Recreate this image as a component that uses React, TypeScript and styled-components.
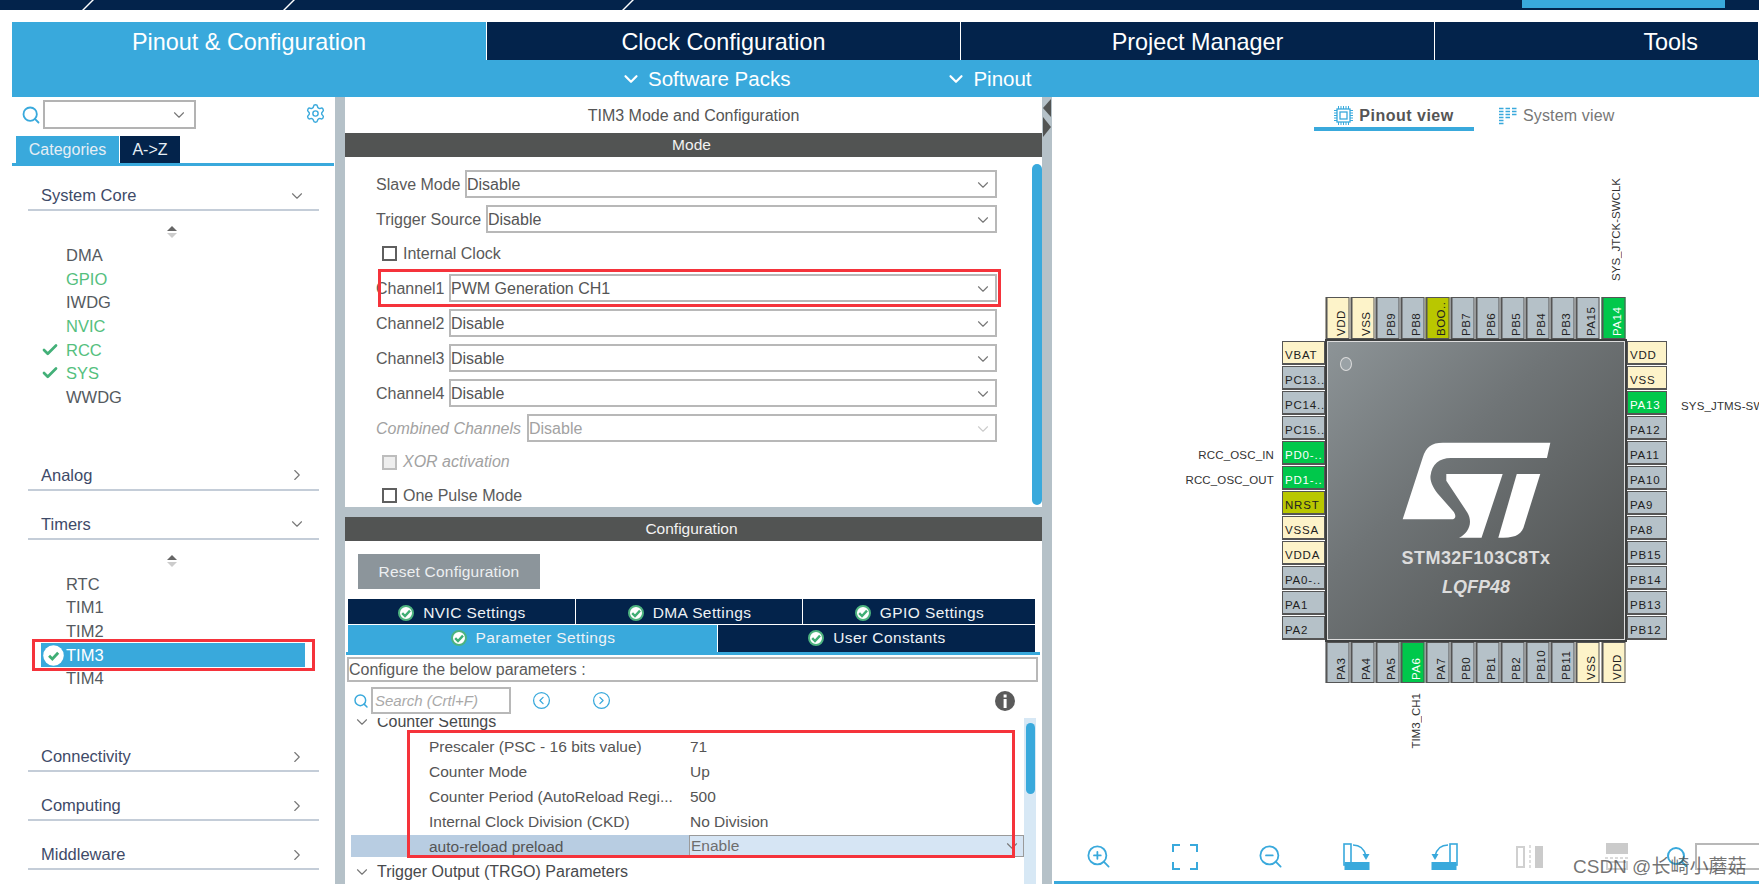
import React from "react";
import styled, { createGlobalStyle } from "styled-components";
import { ChevronDown, ChevronRight, Search, Settings, Check, CircleChevronLeft, CircleChevronRight, ZoomIn, ZoomOut } from "lucide-react";

const NAVY = "#03234b";
const BLUE = "#39a9dc";
const GUTTER = "#b5c1c8";
const FONT = `"Liberation Sans", Arial, sans-serif`;

const Global = createGlobalStyle`
  html, body { margin: 0; padding: 0; background: #fff; overflow: hidden; }
  body { font-family: ${FONT}; }
  * { box-sizing: border-box; }
`;

const Page = styled.div`
  width: 1759px;
  height: 884px;
  display: flex;
  flex-direction: column;
  overflow: hidden;
  position: relative;
`;

const TopBar = styled.div`
  height: 10px;
  background: ${NAVY};
  display: flex;
  align-items: flex-start;
  flex: none;
`;
const Slash = styled.i<{ $ml: number }>`
  display: block;
  width: 2px;
  height: 10px;
  background: #fff;
  transform: skewX(-45deg);
  margin-left: ${(p) => p.$ml}px;
`;
const TopActive = styled.div`
  width: 203px;
  height: 8px;
  background: ${BLUE};
  margin-left: 893px;
`;

const Nav = styled.nav`
  flex: none;
  height: 38px;
  margin: 12px 0 0 12px;
  display: grid;
  grid-template-columns: 475px 474px 474px 1fr;
`;
const NavTab = styled.div<{ $active?: boolean; $end?: boolean }>`
  background: ${(p) => (p.$active ? BLUE : NAVY)};
  border-right: 1px solid #fff;
  color: #fff;
  font-size: 23.4px;
  display: flex;
  align-items: center;
  justify-content: ${(p) => (p.$end ? "flex-end" : "center")};
  padding-right: ${(p) => (p.$end ? 60 : 0)}px;
  padding-top: 3px;
`;
const SubBar = styled.div`
  flex: none;
  height: 37px;
  margin-left: 12px;
  background: ${BLUE};
  color: #fff;
  font-size: 20.5px;
  display: flex;
  align-items: center;
  padding-left: 608px;
  gap: 155px;
`;
const SubItem = styled.div`
  display: flex;
  align-items: center;
  gap: 6px;
`;

const Main = styled.div`
  flex: 1;
  display: flex;
  min-height: 0;
  margin-left: 12px;
`;

/* Sidebar */
const Side = styled.aside`
  width: 323px;
  flex: none;
  display: flex;
  flex-direction: column;
  overflow: hidden;
`;
const SearchRow = styled.div`
  height: 39px;
  display: flex;
  align-items: flex-start;
  padding: 3px 9px 0 9px;
  color: ${BLUE};
`;
const SearchGlyph = styled.div`
  width: 22px;
  height: 29px;
  display: flex;
  align-items: center;
`;
const Combo = styled.div`
  width: 153px;
  height: 29px;
  border: 2px solid #b3b3b3;
  display: flex;
  align-items: center;
  justify-content: flex-end;
  padding-right: 6px;
  color: #777;
`;
const Gear = styled.div`
  margin: 3px 0 0 auto;
  color: ${BLUE};
`;
const SideTabs = styled.div`
  display: flex;
  height: 30px;
  padding-left: 2px;
  border-bottom: 3px solid ${BLUE};
  margin-right: 1px;
`;
const SideTab = styled.div<{ $w: number; $active?: boolean }>`
  width: ${(p) => p.$w}px;
  margin-left: ${(p) => (p.$active ? 2 : 1)}px;
  background: ${(p) => (p.$active ? BLUE : NAVY)};
  color: #e6eef5;
  font-size: 16px;
  display: flex;
  align-items: center;
  justify-content: center;
`;
const SectionHead = styled.div<{ $mt: number }>`
  height: 25px;
  margin: ${(p) => p.$mt}px 16px 0 16px;
  border-bottom: 2px solid #c4cdd8;
  display: flex;
  align-items: center;
  justify-content: space-between;
  padding: 0 13px 4px 13px;
  color: #3e4a68;
  font-size: 16.5px;
  flex: none;
`;
const Scroller = styled.div`
  height: 32px;
  display: flex;
  flex-direction: column;
  align-items: center;
  justify-content: flex-end;
  gap: 2px;
  padding: 0 0 5px 0;
  width: 320px;
`;
const ArrowUp = styled.i`
  width: 0; height: 0;
  border-left: 5px solid transparent;
  border-right: 5px solid transparent;
  border-bottom: 5px solid #666;
`;
const ArrowDown = styled.i`
  width: 0; height: 0;
  border-left: 5px solid transparent;
  border-right: 5px solid transparent;
  border-top: 5px solid #ccc;
`;
const Item = styled.div<{ $green?: boolean; $selected?: boolean }>`
  height: 23.7px;
  position: relative;
  display: flex;
  align-items: center;
  margin-left: 29px;
  width: 264px;
  padding-left: ${(p) => (p.$selected ? 0 : 25)}px;
  padding-top: 1px;
  font-size: 16.5px;
  color: ${(p) => (p.$selected ? "#fff" : p.$green ? "#55c07e" : "#555a60")};
  background: ${(p) => (p.$selected ? BLUE : "transparent")};
`;
const ItemCheck = styled.span`
  position: absolute;
  left: 0;
  top: 3px;
  color: #43b078;
  display: flex;
`;
const SelIcon = styled.span`
  display: flex;
  width: 25px;
  justify-content: center;
`;

const RedBox = styled.div<{ $t: number; $l: number; $r: number; $b: number }>`
  position: absolute;
  top: ${(p) => p.$t}px;
  left: ${(p) => p.$l}px;
  right: ${(p) => p.$r}px;
  bottom: ${(p) => p.$b}px;
  border: 3px solid #f5333b;
  pointer-events: none;
  z-index: 3;
`;

const Gutter = styled.div`
  width: 10px;
  flex: none;
  background: ${GUTTER};
  position: relative;
`;
const SplitLeft = styled.i`
  position: absolute;
  top: 2px;
  left: 1px;
  width: 0; height: 0;
  border-top: 9px solid transparent;
  border-bottom: 9px solid transparent;
  border-right: 8px solid #525453;
`;
const SplitRight = styled.i`
  position: absolute;
  top: 20px;
  left: 1px;
  width: 0; height: 0;
  border-top: 10px solid transparent;
  border-bottom: 10px solid transparent;
  border-left: 8px solid #525453;
`;

/* Center */
const Center = styled.section`
  width: 697px;
  flex: none;
  display: flex;
  flex-direction: column;
  background: ${GUTTER};
`;
const ModePane = styled.div`
  height: 410px;
  background: #fff;
  overflow: hidden;
  display: flex;
  flex-direction: column;
  flex: none;
`;
const PaneTitle = styled.div`
  height: 36px;
  flex: none;
  display: flex;
  align-items: center;
  justify-content: center;
  color: #555;
  font-size: 16px;
  padding-top: 2px;
`;
const DarkBar = styled.div`
  height: 24px;
  flex: none;
  background: #525453;
  color: #f2f2f2;
  font-size: 15.5px;
  display: flex;
  align-items: center;
  justify-content: center;
  padding-right: 4px;
`;
const ModeBody = styled.div`
  flex: 1;
  position: relative;
  padding: 13px 45px 0 31px;
`;
const ModeThumb = styled.div`
  position: absolute;
  right: 0;
  top: 7px;
  width: 10px;
  height: 341px;
  border-radius: 5px;
  background: ${BLUE};
`;
const FieldRow = styled.div`
  height: 28px;
  margin-bottom: 7px;
  display: flex;
  align-items: center;
  position: relative;
`;
const FieldLabel = styled.div<{ $w: number; $off?: boolean }>`
  width: ${(p) => p.$w}px;
  flex: none;
  font-size: 16px;
  padding-top: 1px;
  white-space: nowrap;
  color: ${(p) => (p.$off ? "#a2a2a2" : "#5a5a5a")};
  font-style: ${(p) => (p.$off ? "italic" : "normal")};
`;
const SelectBox = styled.div<{ $off?: boolean }>`
  flex: 1;
  height: 28px;
  border: 2px solid #b8b8b8;
  display: flex;
  align-items: center;
  justify-content: space-between;
  padding: 1px 3px 0 0;
  font-size: 16px;
  color: ${(p) => (p.$off ? "#a2a2a2" : "#555")};
`;
const CheckRow = styled.div<{ $off?: boolean; $h?: number }>`
  height: ${(p) => p.$h ?? 27}px;
  margin-bottom: 7px;
  display: flex;
  align-items: center;
  padding-left: 6px;
  gap: 6px;
  font-size: 16px;
  color: ${(p) => (p.$off ? "#a2a2a2" : "#5a5a5a")};
  font-style: ${(p) => (p.$off ? "italic" : "normal")};
`;
const CheckBox = styled.i<{ $off?: boolean }>`
  width: 15px;
  height: 15px;
  display: block;
  border: 2px solid ${(p) => (p.$off ? "#bdbdbd" : "#5f5f5f")};
  background: ${(p) => (p.$off ? "#eee" : "#fff")};
`;
const ConfigPane = styled.div`
  margin-top: 10px;
  flex: 1;
  min-height: 0;
  background: #fff;
  display: flex;
  flex-direction: column;
`;
const ResetBtn = styled.div`
  width: 182px;
  height: 35px;
  margin: 13px 0 0 13px;
  background: #8c959b;
  color: #eceff1;
  font-size: 15.5px;
  display: flex;
  align-items: center;
  justify-content: center;
  letter-spacing: 0.2px;
  flex: none;
`;
const TabRow = styled.div<{ $cols: string; $h: number; $mt: number; $shift: number }>`
  display: grid;
  grid-template-columns: ${(p) => p.$cols};
  height: ${(p) => p.$h}px;
  margin: ${(p) => p.$mt}px 6px 0 3px;
  flex: none;
  & > div {
    padding-top: ${(p) => Math.max(p.$shift, 0)}px;
    padding-bottom: ${(p) => Math.max(-p.$shift, 0)}px;
  }
`;
const ConfTab = styled.div<{ $active?: boolean }>`
  background: ${(p) => (p.$active ? BLUE : NAVY)};
  color: #eef2f6;
  font-size: 15.5px;
  letter-spacing: 0.4px;
  border-right: 1px solid #fff;
  display: flex;
  align-items: center;
  justify-content: center;
  gap: 8px;
`;
const TabRule = styled.div`
  height: 3px;
  background: ${BLUE};
  margin: 0 2px 0 1px;
  flex: none;
`;
const NoteBox = styled.div`
  height: 25px;
  margin: 2px 4px 0 2px;
  border: 2px solid #b8b8b8;
  font-size: 16px;
  color: #5a5a5a;
  padding-left: 0;
  display: flex;
  align-items: center;
  flex: none;
  white-space: nowrap;
`;
const ToolRow = styled.div`
  height: 27px;
  margin-top: 5px;
  display: flex;
  align-items: center;
  padding-left: 8px;
  color: ${BLUE};
  flex: none;
`;
const SearchInput = styled.div`
  width: 140px;
  height: 27px;
  margin-left: 2px;
  border: 2px solid #b8b8b8;
  color: #a9a9a9;
  font-style: italic;
  font-size: 15px;
  padding-left: 2px;
  display: flex;
  align-items: center;
`;
const RoundBtn = styled.div<{ $ml: number }>`
  margin-left: ${(p) => p.$ml}px;
  display: flex;
  color: ${BLUE};
`;
const Tree = styled.div`
  flex: 1;
  min-height: 0;
  margin-top: 4px;
  display: flex;
  overflow: hidden;
  padding-left: 6px;
`;
const TreeRows = styled.div`
  flex: 1;
  margin-top: -8.5px;
  position: relative;
`;
const TreeGroup = styled.div`
  height: 25px;
  display: flex;
  align-items: center;
  gap: 6px;
  padding-left: 2px;
  color: #47494c;
  font-size: 16px;
  white-space: nowrap;
`;
const ParamBlock = styled.div`
  position: relative;
`;
const ParamRow = styled.div<{ $sel?: boolean }>`
  height: ${(p) => (p.$sel ? 22 : 25)}px;
  margin-bottom: ${(p) => (p.$sel ? 3 : 0)}px;
  display: flex;
  align-items: center;
  font-size: 15.5px;
  color: #555;
  background: ${(p) => (p.$sel ? "#b8cde2" : "transparent")};
  white-space: nowrap;
`;
const ParamName = styled.div<{ $sel?: boolean }>`
  width: 338px;
  padding-left: 78px;
  padding-top: ${(p) => (p.$sel ? 2 : 0)}px;
  flex: none;
  overflow: hidden;
`;
const ParamValue = styled.div<{ $sel?: boolean }>`
  flex: 1;
  height: 100%;
  display: flex;
  align-items: center;
  justify-content: space-between;
  padding: ${(p) => (p.$sel ? 1 : 0)}px 2px 0 1px;
  background: ${(p) => (p.$sel ? "#d6e5f4" : "transparent")};
  border: ${(p) => (p.$sel ? "1px solid #9a9a9a" : "none")};
  color: ${(p) => (p.$sel ? "#6e6e6e" : "#555")};
`;
const Track = styled.div`
  width: 12px;
  margin-right: 6px;
  flex: none;
  background: #d7e8f5;
  padding: 5px 1px 0 2px;
`;
const Thumb = styled.div`
  width: 9px;
  height: 71px;
  border-radius: 5px;
  background: ${BLUE};
`;

/* Right */
const Right = styled.section`
  flex: 1;
  min-width: 0;
  display: flex;
  flex-direction: column;
  position: relative;
  overflow: hidden;
`;
const ViewTabs = styled.div`
  flex: none;
  height: 34px;
  display: flex;
  padding-left: 262px;
`;
const ViewTab = styled.div<{ $active?: boolean }>`
  width: ${(p) => (p.$active ? 160 : 120)}px;
  margin-left: ${(p) => (p.$active ? 0 : 25)}px;
  border-bottom: ${(p) => (p.$active ? `4px solid ${BLUE}` : "none")};
  display: flex;
  align-items: center;
  justify-content: ${(p) => (p.$active ? "center" : "flex-start")};
  gap: 6px;
  padding-top: ${(p) => (p.$active ? 7 : 4)}px;
  height: 34px;
  font-size: 16px;
  font-weight: ${(p) => (p.$active ? 700 : 400)};
  color: ${(p) => (p.$active ? "#555" : "#777")};
  letter-spacing: ${(p) => (p.$active ? 0.5 : 0.15)}px;
`;
const Stage = styled.div`
  flex: 1;
  min-height: 0;
  padding: 166px 0 0 230px;
`;
const Chip = styled.div`
  position: relative;
  display: grid;
  grid-template-columns: 43px 302px 42px;
  grid-template-rows: 42px 303px 41px;
  width: 387px;
`;
const PinRowH = styled.div<{ $row: number }>`
  grid-column: 2;
  grid-row: ${(p) => p.$row};
  display: flex;
  gap: 1.55px;
  padding-left: 1px;
`;
const PinCol = styled.div<{ $col: number }>`
  grid-column: ${(p) => p.$col};
  grid-row: 2;
  display: flex;
  flex-direction: column;
  gap: 1px;
  padding-top: 2px;
`;
const pinBg: Record<string, string> = { gpio: "#b5c1c8", power: "#fdf3c9", green: "#00c84b", olive: "#b9c700" };
const VPin = styled.div<{ $k: string }>`
  width: 23.5px;
  height: 100%;
  background: ${(p) => pinBg[p.$k]};
  border: 1px solid #555;
  border-width: 1px 2px 1px 1px;
  color: ${(p) => (p.$k === "green" ? "#fff" : "#222")};
  writing-mode: vertical-rl;
  transform: rotate(180deg);
  font-size: 11.5px;
  letter-spacing: 0.5px;
  line-height: 24px;
  padding-top: 2px;
  white-space: nowrap;
  overflow: hidden;
`;
const HPin = styled.div<{ $k: string; $w: number }>`
  width: ${(p) => p.$w}px;
  height: 24px;
  background: ${(p) => pinBg[p.$k]};
  border: 1px solid #555;
  border-bottom-width: 2px;
  color: ${(p) => (p.$k === "green" ? "#fff" : "#222")};
  font-size: 11.5px;
  letter-spacing: 0.8px;
  line-height: 26px;
  padding-left: 2px;
  white-space: nowrap;
  overflow: hidden;
`;
const Body = styled.div`
  grid-column: 2;
  grid-row: 2;
  position: relative;
  border: 2px solid #3d3f3f;
  outline: 1px solid #ddd;
  outline-offset: -3px;
  background: linear-gradient(135deg, #8d9497 0%, #6f7476 40%, #4b4d4c 100%);
  display: flex;
  flex-direction: column;
  align-items: center;
  padding-top: 100px;
`;
const Dot = styled.i`
  position: absolute;
  left: 13px;
  top: 16px;
  width: 12px;
  height: 14px;
  border-radius: 50%;
  background: #9aa2a6;
  border: 1px solid #dcdcdc;
`;
const ChipName = styled.div`
  margin-top: 8px;
  color: #dcdcdc;
  font-weight: 700;
  font-size: 18px;
  letter-spacing: 0.45px;
`;
const ChipPkg = styled.div`
  margin-top: 8px;
  color: #dcdcdc;
  font-weight: 700;
  font-style: italic;
  font-size: 18px;
`;
const PinLabel = styled.div<{ $x: number; $y: number; $rot?: boolean; $right?: boolean }>`
  position: absolute;
  left: ${(p) => p.$x}px;
  top: ${(p) => p.$y}px;
  font-size: 11.5px;
  letter-spacing: ${(p) => (p.$rot ? 0 : 0.15)}px;
  color: #333;
  white-space: nowrap;
  ${(p) => (p.$rot ? "writing-mode: vertical-rl; transform: rotate(180deg);" : "")}
  ${(p) => (p.$right ? "transform: translateX(-100%);" : "")}
`;
const Toolbar = styled.div`
  flex: none;
  height: 27px;
  margin-bottom: 11px;
  display: flex;
  align-items: center;
  padding-left: 3px;
  color: ${BLUE};
`;
const ToolSlot = styled.div`
  width: 86.4px;
  flex: none;
  display: flex;
  justify-content: center;
`;
const ZoomGlass = styled.div`
  margin-left: 5px;
  display: flex;
`;
const ZoomBox = styled.div`
  width: 70px;
  height: 27px;
  margin-left: 6px;
  border: 2px solid #b8b8b8;
  flex: none;
`;
const BottomLine = styled.div`
  flex: none;
  height: 3px;
  margin-left: 2px;
  background: ${BLUE};
`;
const Watermark = styled.div`
  position: absolute;
  left: 1573px;
  top: 851px;
  font-family: "Liberation Sans", "Noto Sans CJK SC", sans-serif;
  font-size: 19px;
  color: rgba(70, 70, 70, 0.75);
  white-space: nowrap;
  z-index: 5;
`;

const TickIcon = ({ ring }: { ring?: boolean }) => (
  <svg width={ring ? 18 : 21} height={ring ? 18 : 21} viewBox="0 0 18 18">
    <circle cx="9" cy="9" r={ring ? 7 : 8.8} fill="#fff" stroke={ring ? "#4db37f" : "none"} strokeWidth="2" />
    <path d="M5.2 9.2 8 12 13 6.6" fill="none" stroke="#3fae74" strokeWidth="2.4" />
  </svg>
);
const ChipIcon = () => (
  <svg width="19" height="19" viewBox="0 0 19 19" fill="none" stroke={BLUE}>
    <rect x="3" y="3" width="13" height="13" strokeWidth="1.3" />
    <rect x="6" y="6" width="7" height="7" strokeWidth="1.3" />
    <path d="M4.5 0v3M7 0v3M9.5 0v3M12 0v3M14.5 0v3M4.5 16v3M7 16v3M9.5 16v3M12 16v3M14.5 16v3M0 4.5h3M0 7h3M0 9.5h3M0 12h3M0 14.5h3M16 4.5h3M16 7h3M16 9.5h3M16 12h3M16 14.5h3" strokeWidth="1" />
  </svg>
);
const SysIcon = () => (
  <svg width="18" height="18" viewBox="0 0 18 18" stroke={BLUE} strokeWidth="1.6">
    <path d="M0 1.5h4.5M6.5 1.5h4.5M13 1.5h4.5M0 4.5h4.5M6.5 4.5h4.5M13 4.5h4.5M0 7.5h4.5M6.5 7.5h4.5M13 7.5h4.5M0 10.5h4.5M6.5 10.5h4.5M0 13.5h4.5M0 16.5h4.5" />
  </svg>
);
const FitIcon = () => (
  <svg width="26" height="26" viewBox="0 0 26 26" fill="none" stroke={BLUE} strokeWidth="2">
    <path d="M1 8V1h7M18 1h7v7M25 18v7h-7M8 25H1v-7" />
  </svg>
);
const RotateSvg = styled.svg<{ $flip?: boolean }>`
  transform: ${(p) => (p.$flip ? "scaleX(-1)" : "none")};
`;
const RotateIcon = ({ flip }: { flip?: boolean }) => (
  <RotateSvg $flip={flip} width="28" height="28" viewBox="0 0 28 28" fill="none" stroke={BLUE}>
    <rect x="1" y="1" width="7" height="21" strokeWidth="1.6" />
    <rect x="1.5" y="19" width="25" height="8" fill={BLUE} stroke="none" />
    <path d="M10 2c6 0 11 3 13 11" strokeWidth="1.6" />
    <path d="M19.5 11h7L23 17z" fill={BLUE} stroke="none" />
  </RotateSvg>
);
const MirrorV = () => (
  <svg width="28" height="26" viewBox="0 0 28 26" fill="none">
    <rect x="1" y="3" width="7" height="20" stroke="#d0d0d0" strokeWidth="2" />
    <path d="M14 1v24" stroke="#d0d0d0" strokeWidth="1.4" strokeDasharray="3 2" />
    <rect x="19" y="2" width="8" height="22" fill="#cbcbcb" />
  </svg>
);
const MirrorH = () => (
  <svg width="26" height="28" viewBox="0 0 26 28" fill="none">
    <rect x="2" y="0" width="22" height="11" fill="#cbcbcb" />
    <path d="M1 15h24" stroke="#d0d0d0" strokeWidth="1.4" strokeDasharray="3 2" />
    <rect x="3" y="19" width="20" height="7" stroke="#d0d0d0" strokeWidth="2" />
  </svg>
);
const InfoIcon = () => (
  <svg width="22" height="22" viewBox="0 0 22 22">
    <circle cx="11" cy="11" r="10" fill="#5a5a5a" />
    <rect x="9.6" y="9" width="3" height="9" fill="#fff" />
    <rect x="9.6" y="4.5" width="3" height="3" fill="#fff" />
  </svg>
);
const StLogo = () => (
  <svg width="151" height="99" viewBox="30 35 450 288" fill="#fff">
    <path d="M475 37 465 82H178C145 82 122 100 118 135 116 150 125 172 145 195L185 240C195 252 195 265 180 265H35L95 80C105 50 120 37 155 37Z" />
    <path d="M165 130H333L270 320H203C232 305 245 275 228 245L165 150Z" />
    <path d="M375 130H445L395 290C385 315 365 320 320 320Z" />
  </svg>
);

const top = [["VDD","power"],["VSS","power"],["PB9","gpio"],["PB8","gpio"],["BOO..","olive"],["PB7","gpio"],["PB6","gpio"],["PB5","gpio"],["PB4","gpio"],["PB3","gpio"],["PA15","gpio"],["PA14","green"]];
const bottom = [["PA3","gpio"],["PA4","gpio"],["PA5","gpio"],["PA6","green"],["PA7","gpio"],["PB0","gpio"],["PB1","gpio"],["PB2","gpio"],["PB10","gpio"],["PB11","gpio"],["VSS","power"],["VDD","power"]];
const left = [["VBAT","power"],["PC13..","gpio"],["PC14..","gpio"],["PC15..","gpio"],["PD0-..","green"],["PD1-..","green"],["NRST","olive"],["VSSA","power"],["VDDA","power"],["PA0-..","gpio"],["PA1","gpio"],["PA2","gpio"]];
const right = [["VDD","power"],["VSS","power"],["PA13","green"],["PA12","gpio"],["PA11","gpio"],["PA10","gpio"],["PA9","gpio"],["PA8","gpio"],["PB15","gpio"],["PB14","gpio"],["PB13","gpio"],["PB12","gpio"]];

const Chev = ({ c = "#777" }: { c?: string }) => <ChevronDown size={18} strokeWidth={1.5} color={c} />;
const ChevR = () => <ChevronRight size={18} strokeWidth={1.5} color="#777" />;

const Scrolls = () => (
  <Scroller>
    <ArrowUp />
    <ArrowDown />
  </Scroller>
);

export default function App() {
  return (
    <Page>
      <Global />
      <TopBar>
        <Slash $ml={87} />
        <Slash $ml={199} />
        <Slash $ml={337} />
        <TopActive />
      </TopBar>
      <Nav>
        <NavTab $active>Pinout &amp; Configuration</NavTab>
        <NavTab>Clock Configuration</NavTab>
        <NavTab>Project Manager</NavTab>
        <NavTab $end>Tools</NavTab>
      </Nav>
      <SubBar>
        <SubItem><ChevronDown size={22} strokeWidth={2.4} />Software Packs</SubItem>
        <SubItem><ChevronDown size={22} strokeWidth={2.4} />Pinout</SubItem>
      </SubBar>
      <Main>
        <Side>
          <SearchRow>
            <SearchGlyph><Search size={20} strokeWidth={2.2} /></SearchGlyph>
            <Combo><Chev /></Combo>
            <Gear><Settings size={21} strokeWidth={1.6} /></Gear>
          </SearchRow>
          <SideTabs>
            <SideTab $w={103} $active>Categories</SideTab>
            <SideTab $w={60}>A-&gt;Z</SideTab>
          </SideTabs>
          <SectionHead $mt={20}>System Core<Chev /></SectionHead>
          <Scrolls />
          <Item>DMA</Item>
          <Item $green>GPIO</Item>
          <Item>IWDG</Item>
          <Item $green>NVIC</Item>
          <Item $green><ItemCheck><Check size={18} strokeWidth={3.6} /></ItemCheck>RCC</Item>
          <Item $green><ItemCheck><Check size={18} strokeWidth={3.6} /></ItemCheck>SYS</Item>
          <Item>WWDG</Item>
          <SectionHead $mt={57}>Analog<ChevR /></SectionHead>
          <SectionHead $mt={24}>Timers<Chev /></SectionHead>
          <Scrolls />
          <Item>RTC</Item>
          <Item>TIM1</Item>
          <Item>TIM2</Item>
          <Item $selected>
            <SelIcon><TickIcon /></SelIcon>TIM3
            <RedBox $t={-4} $l={-9} $r={-10} $b={-4} />
          </Item>
          <Item>TIM4</Item>
          <SectionHead $mt={57}>Connectivity<ChevR /></SectionHead>
          <SectionHead $mt={24}>Computing<ChevR /></SectionHead>
          <SectionHead $mt={24}>Middleware<ChevR /></SectionHead>
        </Side>
        <Gutter />
        <Center>
          <ModePane>
            <PaneTitle>TIM3 Mode and Configuration</PaneTitle>
            <DarkBar>Mode</DarkBar>
            <ModeBody>
              <FieldRow><FieldLabel $w={89}>Slave Mode</FieldLabel><SelectBox>Disable<Chev /></SelectBox></FieldRow>
              <FieldRow><FieldLabel $w={110}>Trigger Source</FieldLabel><SelectBox>Disable<Chev /></SelectBox></FieldRow>
              <CheckRow><CheckBox />Internal Clock</CheckRow>
              <FieldRow>
                <FieldLabel $w={73}>Channel1</FieldLabel><SelectBox>PWM Generation CH1<Chev /></SelectBox>
                <RedBox $t={-5} $l={2} $r={-4} $b={-5} />
              </FieldRow>
              <FieldRow><FieldLabel $w={73}>Channel2</FieldLabel><SelectBox>Disable<Chev /></SelectBox></FieldRow>
              <FieldRow><FieldLabel $w={73}>Channel3</FieldLabel><SelectBox>Disable<Chev /></SelectBox></FieldRow>
              <FieldRow><FieldLabel $w={73}>Channel4</FieldLabel><SelectBox>Disable<Chev /></SelectBox></FieldRow>
              <FieldRow><FieldLabel $w={151} $off>Combined Channels</FieldLabel><SelectBox $off>Disable<Chev c="#ccc" /></SelectBox></FieldRow>
              <CheckRow $off $h={26}><CheckBox $off />XOR activation</CheckRow>
              <CheckRow><CheckBox />One Pulse Mode</CheckRow>
              <ModeThumb />
            </ModeBody>
          </ModePane>
          <ConfigPane>
            <DarkBar>Configuration</DarkBar>
            <ResetBtn>Reset Configuration</ResetBtn>
            <TabRow $cols="228px 227px 1fr" $h={25} $mt={10} $shift={2}>
              <ConfTab><TickIcon ring />NVIC Settings</ConfTab>
              <ConfTab><TickIcon ring />DMA Settings</ConfTab>
              <ConfTab><TickIcon ring />GPIO Settings</ConfTab>
            </TabRow>
            <TabRow $cols="370px 1fr" $h={27} $mt={1} $shift={-2}>
              <ConfTab $active><TickIcon ring />Parameter Settings</ConfTab>
              <ConfTab><TickIcon ring />User Constants</ConfTab>
            </TabRow>
            <TabRule />
            <NoteBox>Configure the below parameters :</NoteBox>
            <ToolRow>
              <Search size={16} strokeWidth={2.2} />
              <SearchInput>Search (Crtl+F)</SearchInput>
              <RoundBtn $ml={21}><CircleChevronLeft size={19} strokeWidth={1.6} /></RoundBtn>
              <RoundBtn $ml={41}><CircleChevronRight size={19} strokeWidth={1.6} /></RoundBtn>
              <RoundBtn $ml={383}><InfoIcon /></RoundBtn>
            </ToolRow>
            <Tree>
              <TreeRows>
                <TreeGroup><Chev />Counter Settings</TreeGroup>
                <ParamBlock>
                  <ParamRow><ParamName>Prescaler (PSC - 16 bits value)</ParamName><ParamValue>71</ParamValue></ParamRow>
                  <ParamRow><ParamName>Counter Mode</ParamName><ParamValue>Up</ParamValue></ParamRow>
                  <ParamRow><ParamName>Counter Period (AutoReload Regi...</ParamName><ParamValue>500</ParamValue></ParamRow>
                  <ParamRow><ParamName>Internal Clock Division (CKD)</ParamName><ParamValue>No Division</ParamValue></ParamRow>
                  <ParamRow $sel><ParamName $sel>auto-reload preload</ParamName><ParamValue $sel>Enable<Chev /></ParamValue></ParamRow>
                  <RedBox $t={-5} $l={56} $r={9} $b={-1} />
                </ParamBlock>
                <TreeGroup><Chev />Trigger Output (TRGO) Parameters</TreeGroup>
              </TreeRows>
              <Track><Thumb /></Track>
            </Tree>
          </ConfigPane>
        </Center>
        <Gutter><SplitLeft /><SplitRight /></Gutter>
        <Right>
          <ViewTabs>
            <ViewTab $active><ChipIcon />Pinout view</ViewTab>
            <ViewTab><SysIcon />System view</ViewTab>
          </ViewTabs>
          <Stage>
            <Chip>
              <PinRowH $row={1}>{top.map(([t, k], i) => <VPin key={i} $k={k}>{t}</VPin>)}</PinRowH>
              <PinCol $col={1}>
                {left.map(([t, k], i) => <HPin key={i} $k={k} $w={43}>{t}</HPin>)}
              </PinCol>
              <Body>
                <Dot />
                <StLogo />
                <ChipName>STM32F103C8Tx</ChipName>
                <ChipPkg>LQFP48</ChipPkg>
              </Body>
              <PinCol $col={3}>
                {right.map(([t, k], i) => <HPin key={i} $k={k} $w={40}>{t}</HPin>)}
              </PinCol>
              <PinRowH $row={3}>{bottom.map(([t, k], i) => <VPin key={i} $k={k}>{t}</VPin>)}</PinRowH>
              <PinLabel $x={328} $y={-119} $rot>SYS_JTCK-SWCLK</PinLabel>
              <PinLabel $x={399} $y={103}>SYS_JTMS-SWDIO</PinLabel>
              <PinLabel $x={-8} $y={152} $right>RCC_OSC_IN</PinLabel>
              <PinLabel $x={-8} $y={177} $right>RCC_OSC_OUT</PinLabel>
              <PinLabel $x={128} $y={396} $rot>TIM3_CH1</PinLabel>
            </Chip>
          </Stage>
          <Toolbar>
            <ToolSlot><ZoomIn size={27} strokeWidth={1.6} /></ToolSlot>
            <ToolSlot><FitIcon /></ToolSlot>
            <ToolSlot><ZoomOut size={27} strokeWidth={1.6} /></ToolSlot>
            <ToolSlot><RotateIcon /></ToolSlot>
            <ToolSlot><RotateIcon flip /></ToolSlot>
            <ToolSlot><MirrorV /></ToolSlot>
            <ToolSlot><MirrorH /></ToolSlot>
            <ZoomGlass><Search size={24} strokeWidth={2} /></ZoomGlass>
            <ZoomBox />
          </Toolbar>
          <BottomLine />
        </Right>
      </Main>
      <Watermark>CSDN @长崎小蘑菇</Watermark>
    </Page>
  );
}
